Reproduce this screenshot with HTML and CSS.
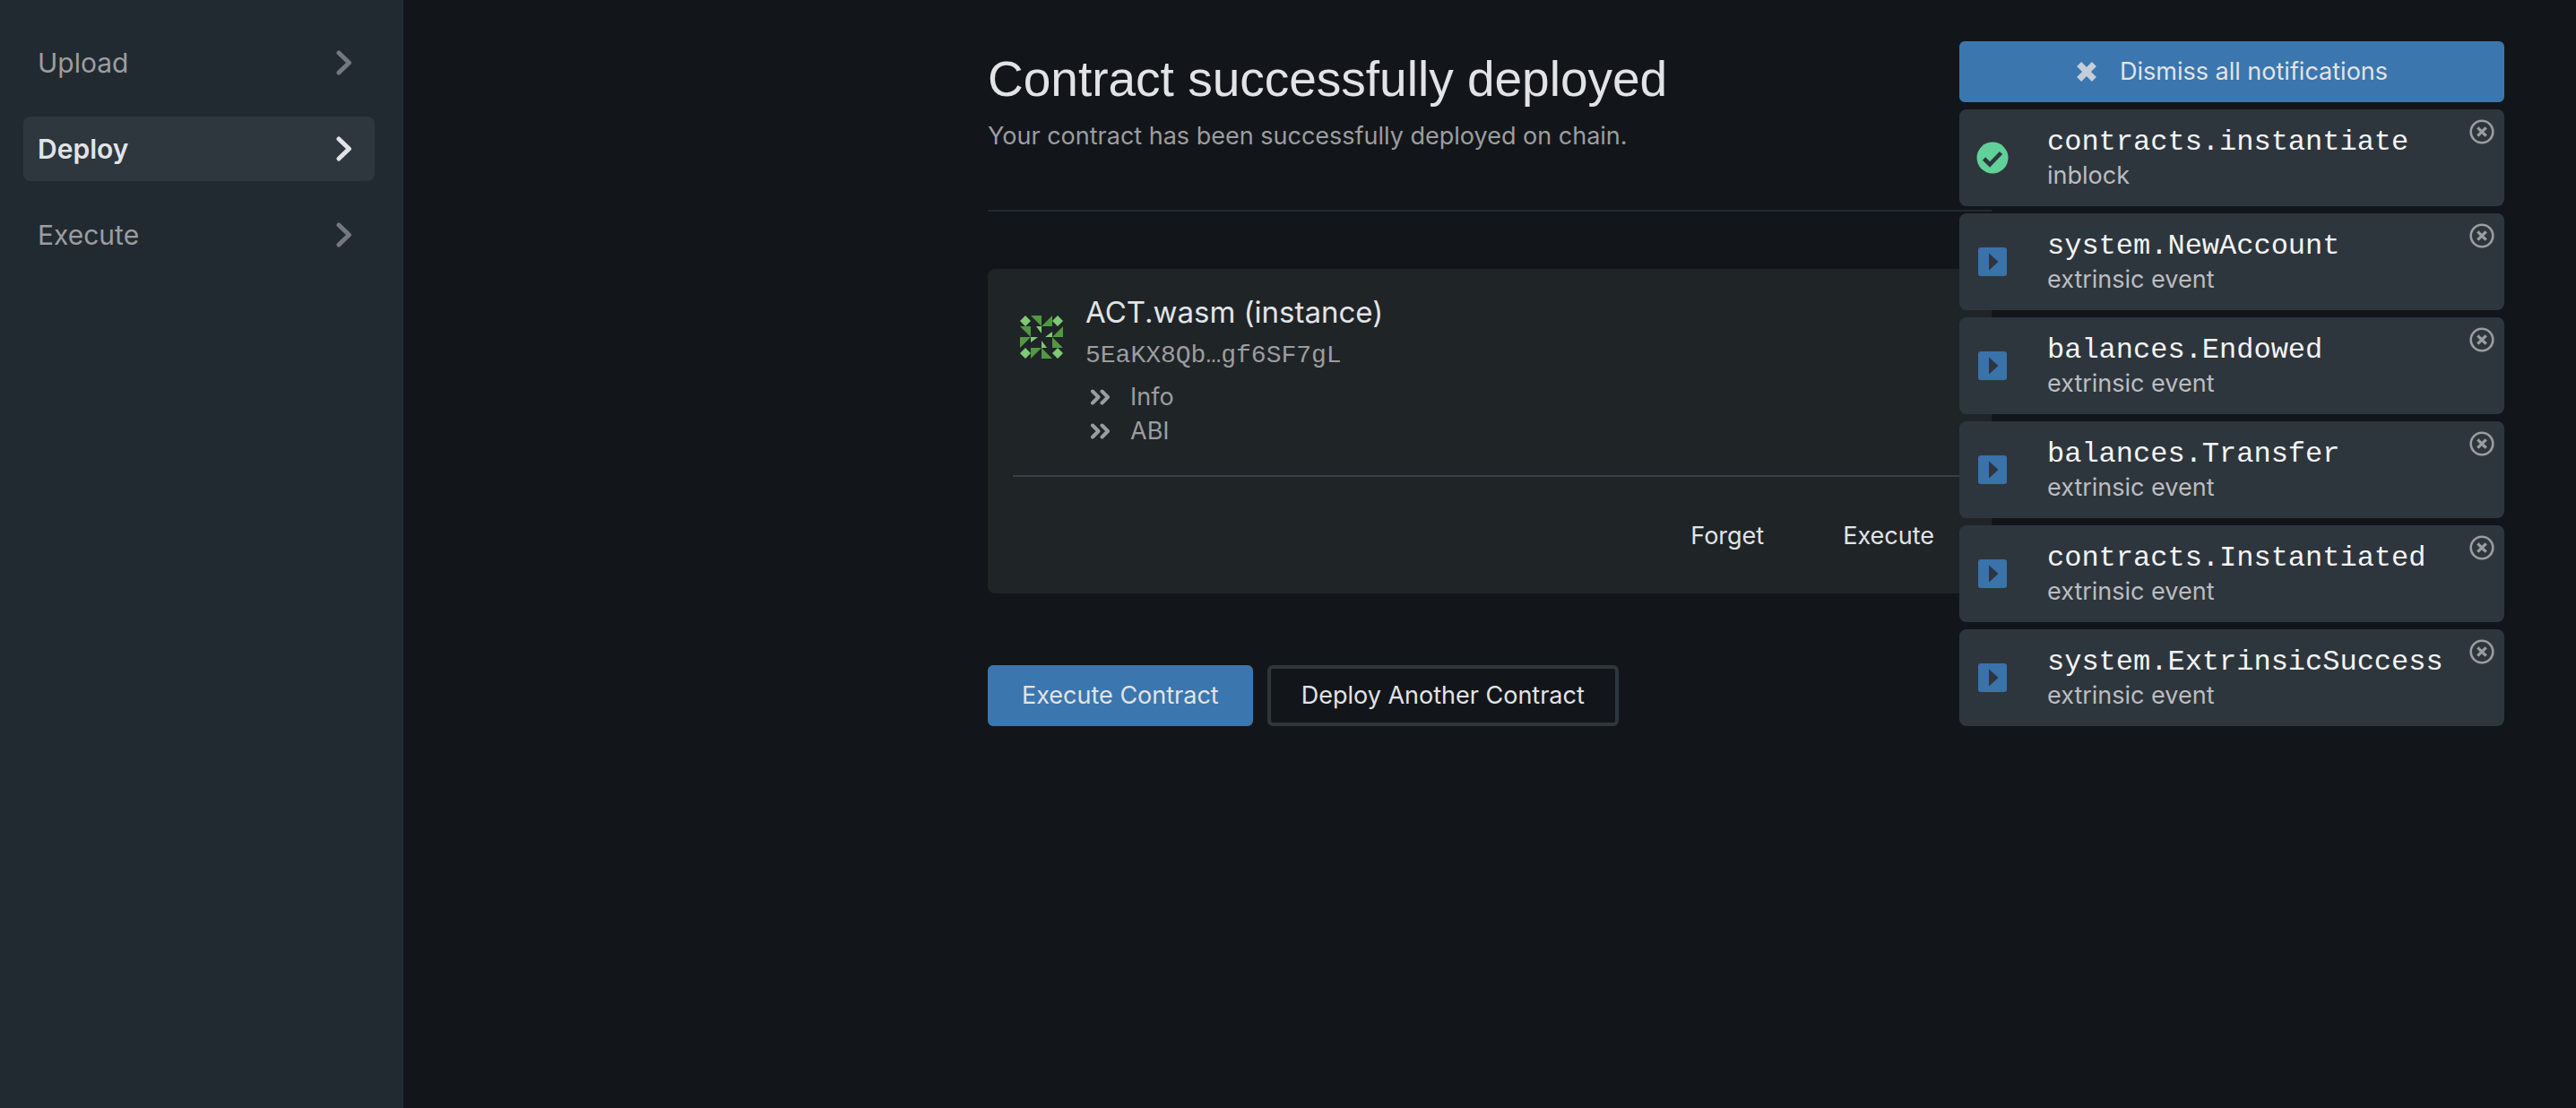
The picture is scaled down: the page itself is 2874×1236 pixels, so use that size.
FILE: index.html
```html
<!DOCTYPE html>
<html lang="en">
<head>
<meta charset="utf-8">
<title>Contract successfully deployed</title>
<link rel="stylesheet" href="styles.css">
</head>
<body>
<svg class="sprite" aria-hidden="true">
  <symbol id="chevron" viewBox="0 0 18 28"><path d="M3 3l11.500 11L3 25" fill="none" stroke="currentColor" stroke-width="5" stroke-linecap="round" stroke-linejoin="round"/></symbol>
  <symbol id="double" viewBox="0 0 24 18"><path d="M3 2.500L9.500 9 3 15.500M13.500 2.500L20 9l-6.500 6.500" fill="none" stroke="currentColor" stroke-width="4" stroke-linecap="round" stroke-linejoin="round"/></symbol>
  <symbol id="cross" viewBox="0 0 22 22"><path d="M3.300 3.300l15.400 15.400M18.700 3.300L3.300 18.700" fill="none" stroke="currentColor" stroke-width="6.500"/></symbol>
  <symbol id="close" viewBox="0 0 28 28"><circle cx="14" cy="14" r="12.300" fill="none" stroke="currentColor" stroke-width="2.600"/><path d="M9.300 9.300l9.400 9.400M18.700 9.300l-9.400 9.400" fill="none" stroke="currentColor" stroke-width="3.200"/></symbol>
  <symbol id="check" viewBox="0 0 36 36"><circle cx="18" cy="18" r="17.500" fill="#61d199"/><path d="M8.500 19l6.500 6.500L27.500 12.500" fill="none" stroke="#2e363d" stroke-width="4.600"/></symbol>
  <symbol id="play" viewBox="0 0 36 36"><rect x="2" y="2" width="32" height="32" rx="3" fill="#3a72aa"/><path d="M14 8.500v19L24.500 18z" fill="#2e363d"/></symbol>
</svg>
<div class="layout">
  <nav class="sidebar" aria-label="Steps">
    <a class="step" href="#upload">Upload<svg><use href="#chevron"/></svg></a>
    <a class="step step-active" href="#deploy" aria-current="page">Deploy<svg><use href="#chevron"/></svg></a>
    <a class="step" href="#execute">Execute<svg><use href="#chevron"/></svg></a>
  </nav>
  <main class="main">
    <div class="content">
      <header class="intro">
        <h1>Contract successfully deployed</h1>
        <p>Your contract has been successfully deployed on chain.</p>
      </header>
      <section class="card">
        <div class="card-body">
          <svg class="identicon" viewBox="0 0 48 48" role="img" aria-label="Account identicon">
            <path fill="#519843" d="M12 0h12v12zM36 0v12H24zM0 12h12v12zM48 12v12H36zM0 24h12L0 36zM36 24l12 12H36zM12 36h12L12 48zM24 36l12 12H24z"/>
            <path fill="#7fca75" d="M6 0l6 6-6 6-6-6zM42 0l6 6-6 6-6-6zM6 36l6 6-6 6-6-6zM42 36l6 6-6 6-6-6zM18 12h6v8zM36 18v6h-8zM12 24h8l-8 6zM24 28l6 8h-6z"/>
          </svg>
          <div class="details">
            <h2>ACT.wasm (instance)</h2>
            <div class="address">5EaKX8Qb…gf6SF7gL</div>
            <button class="toggle" type="button"><svg><use href="#double"/></svg>Info</button>
            <button class="toggle" type="button"><svg><use href="#double"/></svg>ABI</button>
          </div>
        </div>
        <div class="card-actions">
          <button class="plain" type="button">Forget</button>
          <button class="plain" type="button">Execute</button>
        </div>
      </section>
      <div class="actions">
        <button class="button primary" type="button">Execute Contract</button>
        <button class="button outline" type="button">Deploy Another Contract</button>
      </div>
    </div>
  </main>
</div>
<aside class="notifications" aria-label="Notifications">
  <button class="button primary dismiss" type="button"><svg><use href="#cross"/></svg>Dismiss all notifications</button>
  <div class="note"><svg class="status"><use href="#check"/></svg><div class="note-text"><strong>contracts.instantiate</strong><span>inblock</span></div><button class="close" type="button" aria-label="Dismiss"><svg><use href="#close"/></svg></button></div>
  <div class="note"><svg class="status"><use href="#play"/></svg><div class="note-text"><strong>system.NewAccount</strong><span>extrinsic event</span></div><button class="close" type="button" aria-label="Dismiss"><svg><use href="#close"/></svg></button></div>
  <div class="note"><svg class="status"><use href="#play"/></svg><div class="note-text"><strong>balances.Endowed</strong><span>extrinsic event</span></div><button class="close" type="button" aria-label="Dismiss"><svg><use href="#close"/></svg></button></div>
  <div class="note"><svg class="status"><use href="#play"/></svg><div class="note-text"><strong>balances.Transfer</strong><span>extrinsic event</span></div><button class="close" type="button" aria-label="Dismiss"><svg><use href="#close"/></svg></button></div>
  <div class="note"><svg class="status"><use href="#play"/></svg><div class="note-text"><strong>contracts.Instantiated</strong><span>extrinsic event</span></div><button class="close" type="button" aria-label="Dismiss"><svg><use href="#close"/></svg></button></div>
  <div class="note"><svg class="status"><use href="#play"/></svg><div class="note-text"><strong>system.ExtrinsicSuccess</strong><span>extrinsic event</span></div><button class="close" type="button" aria-label="Dismiss"><svg><use href="#close"/></svg></button></div>
</aside>
</body>
</html>
```
FILE: styles.css
```css
* { box-sizing: border-box; }
body {
  margin: 0;
  background: #12161a;
  color: #e2e3e7;
  font: 27px/40px Inter, "Liberation Sans", sans-serif;
}
h1, h2, p { margin: 0; font-weight: 400; }
button {
  padding: 0;
  border: 0;
  background: none;
  color: inherit;
  font: inherit;
  cursor: pointer;
}
.sprite { position: absolute; width: 0; height: 0; }
.layout { display: flex; min-height: 100vh; }

.sidebar {
  display: flex;
  flex: 0 0 450px;
  flex-direction: column;
  gap: 24px;
  padding: 34px 32px 34px 26px;
  background: #222a31;
}
.step {
  display: flex;
  align-items: center;
  justify-content: space-between;
  padding: 16px 25px 16px 16px;
  border-radius: 8px;
  color: #9c9d9f;
  font-size: 30px;
  text-decoration: none;
}
.step svg { width: 18px; height: 28px; color: #75787e; }
.step-active { background: #2d373d; color: #e2e3e7; font-weight: 600; }
.step-active svg { color: #e2e3e7; }

.main { flex: 1; padding: 56px 40px; }
.content { max-width: 1120px; margin: 0 auto; }
.intro { padding-bottom: 62px; border-bottom: 2px solid #222a31; }
.intro h1 { font-family: "Liberation Sans", sans-serif; font-size: 55px; line-height: 64px; }
.intro p { margin-top: 12px; color: #9c9d9f; }

.card {
  margin: 64px 0 80px;
  padding: 24px 28px;
  border-radius: 8px;
  background: #1f2427;
}
.card-body {
  display: flex;
  gap: 25px;
  padding: 0 8px 30px;
  border-bottom: 2px solid #35414a;
}
.identicon { width: 48px; height: 48px; margin-top: 28px; }
.details { display: flex; flex-direction: column; align-items: flex-start; }
.details h2 { font-size: 33px; line-height: 48px; }
.address { margin-bottom: 2px; color: #9c9d9f; font: 28px/50px "Liberation Mono", monospace; }
.toggle { display: flex; align-items: center; gap: 21px; padding-left: 5px; color: #9c9d9f; line-height: 38px; }
.toggle svg { width: 24px; height: 18px; }
.card-actions { display: flex; justify-content: flex-end; gap: 88px; padding: 46px 36px 20px; }

.actions { display: flex; gap: 16px; }
.button { padding: 14px 34px; border: 4px solid transparent; border-radius: 6px; line-height: 32px; }
.primary { border-color: #3b76ae; background: #3b76ae; }
.outline { border-color: #2d373d; }

.notifications {
  position: absolute;
  top: 46px;
  right: 80px;
  display: grid;
  gap: 8px;
  width: 608px;
}
.dismiss { display: flex; align-items: center; justify-content: center; gap: 25px; }
.dismiss svg { width: 24px; height: 24px; color: #c3cedb; }
.note {
  display: flex;
  align-items: center;
  padding: 17px 11px 17px 19px;
  border-radius: 8px;
  background: rgba(47, 55, 62, 0.98);
}
.status { flex: none; width: 36px; height: 36px; }
.note-text { display: grid; flex: 1; margin-left: 43px; }
.note-text strong { color: #f4f4f4; font: 32px/40px "Liberation Mono", monospace; }
.note-text span { color: #bbbdc0; line-height: 34px; }
.close { align-self: flex-start; width: 28px; height: 28px; margin-top: -6px; color: #9c9d9f; }
.close svg { display: block; width: 28px; height: 28px; }
```
